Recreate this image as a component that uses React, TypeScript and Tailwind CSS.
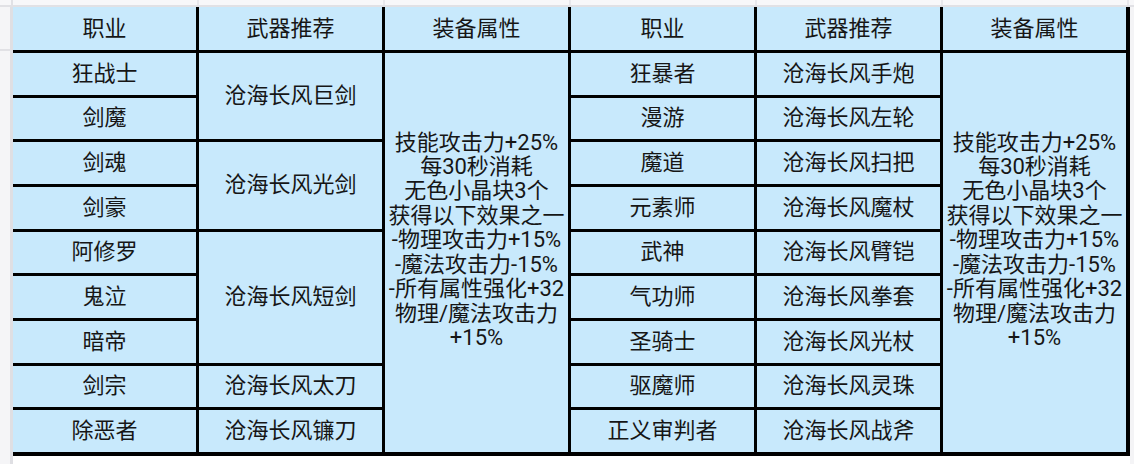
import React from "react";

const font = { fontFamily: 'Roboto, "Noto Sans CJK SC", sans-serif' };

const attr = [
  "技能攻击力+25%",
  "每30秒消耗",
  "无色小晶块3个",
  "获得以下效果之一",
  "-物理攻击力+15%",
  "-魔法攻击力-15%",
  "-所有属性强化+32",
  "物理/魔法攻击力",
  "+15%",
];

const cell =
  "bg-[#c8e9fc] flex items-center justify-center text-[22px] leading-none text-[#161616] whitespace-nowrap";

function AttrCell({ col }: { col: string }) {
  return (
    <div className={`${cell} ${col} row-start-2 row-span-9 flex-col pb-[24px]`}>
      {attr.map((l, i) => (
        <div key={i} className="leading-[24.4px] text-center">
          {l}
        </div>
      ))}
    </div>
  );
}

export default function App() {
  const leftJobs = ["狂战士", "剑魔", "剑魂", "剑豪", "阿修罗", "鬼泣", "暗帝", "剑宗", "除恶者"];
  const rightJobs = ["狂暴者", "漫游", "魔道", "元素师", "武神", "气功师", "圣骑士", "驱魔师", "正义审判者"];
  const rightWeapons = [
    "沧海长风手炮",
    "沧海长风左轮",
    "沧海长风扫把",
    "沧海长风魔杖",
    "沧海长风臂铠",
    "沧海长风拳套",
    "沧海长风光杖",
    "沧海长风灵珠",
    "沧海长风战斧",
  ];
  const leftWeapons: { t: string; start: string; span: string }[] = [
    { t: "沧海长风巨剑", start: "row-start-2", span: "row-span-2" },
    { t: "沧海长风光剑", start: "row-start-4", span: "row-span-2" },
    { t: "沧海长风短剑", start: "row-start-6", span: "row-span-3" },
    { t: "沧海长风太刀", start: "row-start-9", span: "row-span-1" },
    { t: "沧海长风镰刀", start: "row-start-10", span: "row-span-1" },
  ];
  const rowStarts = [
    "row-start-2",
    "row-start-3",
    "row-start-4",
    "row-start-5",
    "row-start-6",
    "row-start-7",
    "row-start-8",
    "row-start-9",
    "row-start-10",
  ];
  const gridCols = ["", "", "", "", "", ""];

  return (
    <div className="w-[1134px] h-[464px] bg-white overflow-hidden flex flex-col" style={font}>
      {/* top strip */}
      <div className="h-[7px] flex shrink-0 bg-[#f7f7f9] border-b-2 border-[#e1e1e5]">
        <div className="w-[13px] shrink-0 border-r-2 border-[#e1e1e5]" />
        {gridCols.map((_, i) => (
          <div key={i} className="w-[186px] shrink-0 border-r-2 border-[#e8e8ec]" />
        ))}
      </div>
      <div className="flex">
        {/* left strip */}
        <div className="w-[13px] h-[457px] shrink-0 bg-[#f5f5f7] border-r-[3px] border-[#dfdfe3] flex flex-col">
          <div className="h-[44px] border-b-2 border-[#e1e1e5]" />
        </div>
        {/* table */}
        <div className="h-[449px] bg-black border-r-4 border-b-4 border-black grid grid-cols-[repeat(6,183px)] grid-rows-[43px_repeat(9,minmax(0,1fr))] gap-[3px]">
          <div className={`${cell} col-start-1 row-start-1`}>职业</div>
          <div className={`${cell} col-start-2 row-start-1`}>武器推荐</div>
          <div className={`${cell} col-start-3 row-start-1`}>装备属性</div>
          <div className={`${cell} col-start-4 row-start-1`}>职业</div>
          <div className={`${cell} col-start-5 row-start-1`}>武器推荐</div>
          <div className={`${cell} col-start-6 row-start-1`}>装备属性</div>

          {leftJobs.map((j, i) => (
            <div key={"lj" + i} className={`${cell} col-start-1 ${rowStarts[i]}`}>
              {j}
            </div>
          ))}
          {leftWeapons.map((w, i) => (
            <div key={"lw" + i} className={`${cell} col-start-2 ${w.start} ${w.span}`}>
              {w.t}
            </div>
          ))}
          <AttrCell col="col-start-3" />

          {rightJobs.map((j, i) => (
            <div key={"rj" + i} className={`${cell} col-start-4 ${rowStarts[i]}`}>
              {j}
            </div>
          ))}
          {rightWeapons.map((w, i) => (
            <div key={"rw" + i} className={`${cell} col-start-5 ${rowStarts[i]}`}>
              {w}
            </div>
          ))}
          <AttrCell col="col-start-6" />
        </div>
        {/* right strip */}
        <div className="flex-1 h-[457px] bg-[#f4f4f6]" />
      </div>
    </div>
  );
}
